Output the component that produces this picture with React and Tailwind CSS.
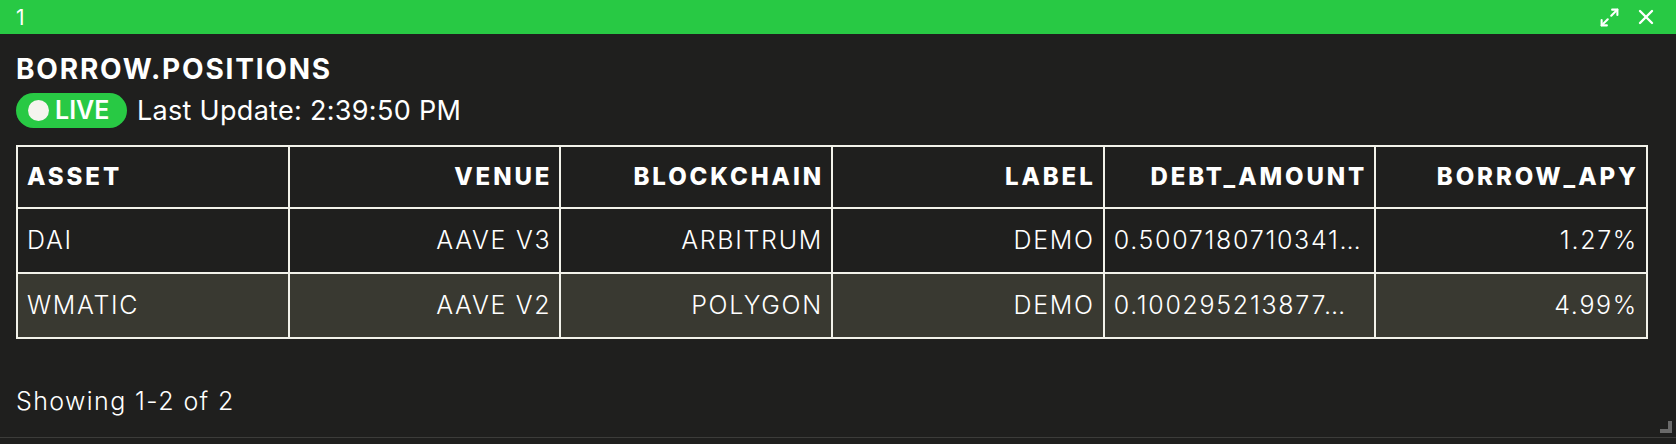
import { Maximize2, X } from 'lucide-react'

// debt amounts are shown clipped, as the grid shows them
const rows = [
  { asset: 'DAI', venue: 'AAVE V3', chain: 'ARBITRUM', label: 'DEMO', debt: '0.5007180710341…', apy: '1.27%' },
  { asset: 'WMATIC', venue: 'AAVE V2', chain: 'POLYGON', label: 'DEMO', debt: '0.100295213877…', apy: '4.99%' },
]

const cols = ['ASSET', 'VENUE', 'BLOCKCHAIN', 'LABEL', 'DEBT_AMOUNT', 'BORROW_APY']

const cell = 'border-2 border-[#f2f2ea] pl-[9px] pr-[8px] text-[25px] font-light tracking-[1.7px]'

export default function App() {
  return (
    <div
      className="w-full h-[444px] bg-[#1f1f1e] text-white flex flex-col overflow-hidden"
      style={{ fontFamily: 'Inter, "Noto Sans", sans-serif' }}
    >
      {/* window bar */}
      <div className="h-[34px] shrink-0 bg-[#28c944] flex items-center justify-between pl-4 pr-[18px]">
        <span className="text-[21px] leading-none">1</span>
        <div className="flex items-center gap-[14px]">
          <Maximize2 size={21} strokeWidth={2.4} />
          <X size={24} strokeWidth={2.4} />
        </div>
      </div>

      <div className="flex-1 pl-4 pr-[28px] pt-[17px] flex flex-col">
        <h1 className="text-[28px] leading-[36px] font-bold tracking-[1.8px]">BORROW.POSITIONS</h1>

        <div className="flex items-center gap-[10px] mt-[6px]">
          <span className="h-[35px] w-[111px] rounded-full bg-[#28c944] flex items-center pl-[12px] gap-[6px]">
            <span className="w-[21px] h-[21px] rounded-full bg-[#f4f4ee]" />
            <span className="text-[25px] leading-none font-semibold">LIVE</span>
          </span>
          <span className="text-[27px] leading-none tracking-[0.3px]">Last Update: 2:39:50 PM</span>
        </div>

        <table className="w-full table-fixed border-collapse mt-[17px] border-2 border-[#f2f2ea]">
          <thead>
            <tr className="h-[62px]">
              {cols.map((c, i) => (
                <th
                  key={c}
                  className={
                    'border-2 border-[#f2f2ea] pl-[9px] pr-[7px] text-[24px] font-extrabold tracking-[2.9px] ' +
                    (i === 0 ? 'text-left' : 'text-right')
                  }
                >
                  {c}
                </th>
              ))}
            </tr>
          </thead>
          <tbody>
            {rows.map((r, ri) => (
              <tr key={r.asset} className={'h-[65px] ' + (ri === 1 ? 'bg-[#393931]' : '')}>
                <td className={cell + ' text-left'}>{r.asset}</td>
                <td className={cell + ' text-right'}>{r.venue}</td>
                <td className={cell + ' text-right'}>{r.chain}</td>
                <td className={cell + ' text-right'}>{r.label}</td>
                <td className={cell + ' text-left truncate'}>{r.debt}</td>
                <td className={cell + ' text-right'}>{r.apy}</td>
              </tr>
            ))}
          </tbody>
        </table>

        <p className="text-[25px] font-light tracking-[1.4px] mt-[44px]">Showing 1-2 of 2</p>

        <div className="flex-1 flex items-end justify-end pb-[4px] -mr-[24px]">
          <span className="w-[12px] h-[12px] border-r-[4px] border-b-[4px] border-[#6a6a6a]" />
        </div>
      </div>

      <div className="h-[7px] shrink-0 border-t border-[#3c3c3a]" />
    </div>
  )
}
